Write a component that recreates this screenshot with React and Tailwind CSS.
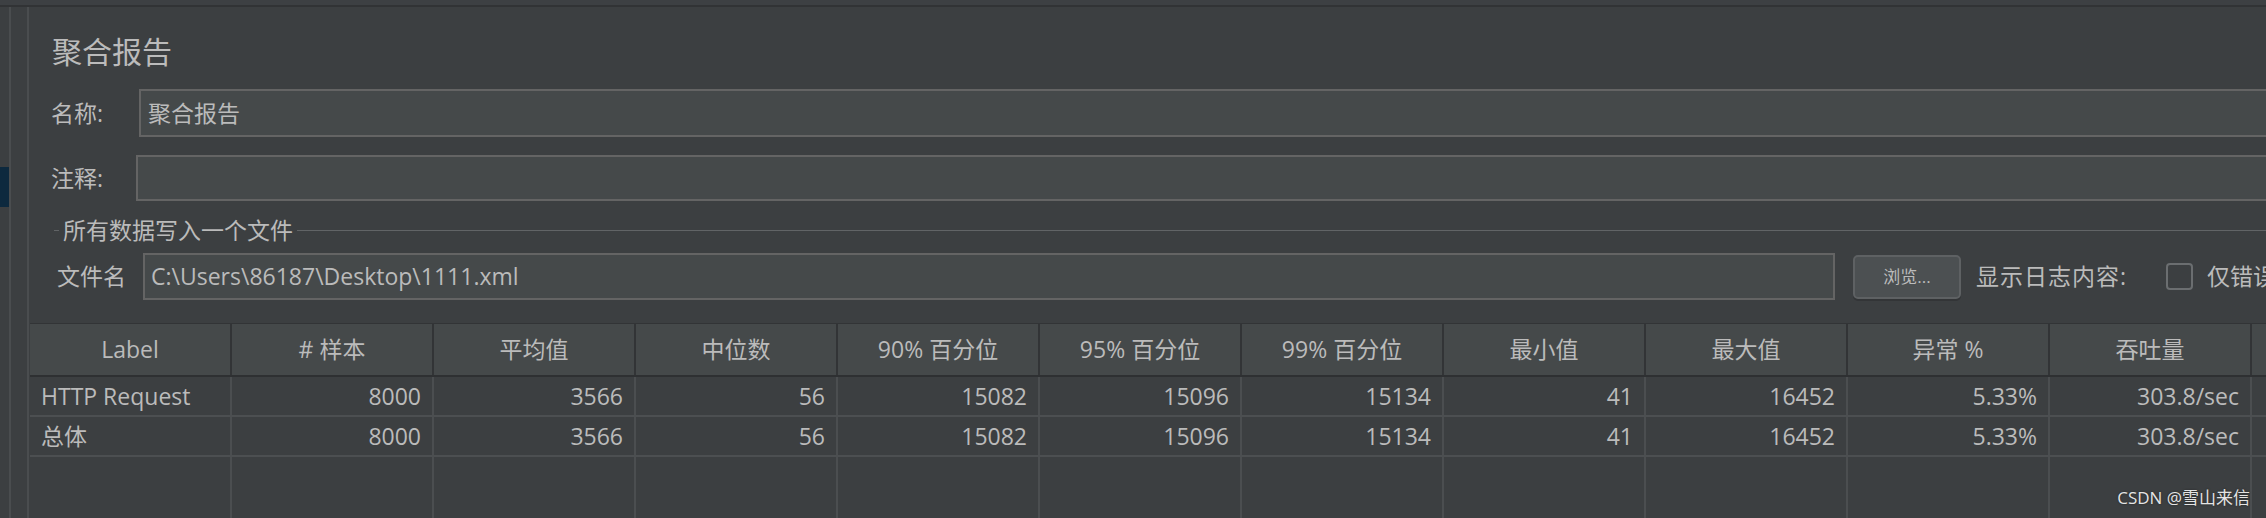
import React from "react";

const COLUMNS = ["Label", "# 样本", "平均值", "中位数", "90% 百分位", "95% 百分位", "99% 百分位", "最小值", "最大值", "异常 %", "吞吐量", ""];

const ROWS = [
  ["HTTP Request", "8000", "3566", "56", "15082", "15096", "15134", "41", "16452", "5.33%", "303.8/sec", ""],
  ["总体", "8000", "3566", "56", "15082", "15096", "15134", "41", "16452", "5.33%", "303.8/sec", ""],
];

function ResultTable() {
  return (
    <div className="ml-[1px] flex flex-1 flex-col">
      {/* 表头 */}
      <div className="flex h-[54px] border-t border-b-2 border-t-[#323436] border-b-[#2e3032] bg-[#45494a]">
        {COLUMNS.map((col, i) => (
          <div
            key={i}
            className="flex h-full w-[202px] shrink-0 items-center justify-center border-r-2 border-[#323436]"
          >
            {col}
          </div>
        ))}
        <div className="flex-1" />
      </div>

      {/* 数据行 */}
      {ROWS.map((row, r) => (
        <div key={r} className="flex h-[40px] border-b-2 border-[#4c4f51]">
          {row.map((cell, i) => (
            <div
              key={i}
              className={`flex h-full w-[202px] shrink-0 items-center border-r-2 border-[#4b4e50] ${
                i === 0 ? "justify-start pl-[11px]" : "justify-end pr-[11px]"
              }`}
            >
              {cell}
            </div>
          ))}
        </div>
      ))}

      {/* 空白区域 */}
      <div className="flex flex-1">
        {COLUMNS.map((_, i) => (
          <div key={i} className="h-full w-[202px] shrink-0 border-r-2 border-[#4b4e50]" />
        ))}
      </div>
    </div>
  );
}

export default function App() {
  return (
    <div className="relative flex h-[518px] w-[2266px] flex-col overflow-hidden bg-[#3c3f41] font-['Open_Sans','Noto_Sans_CJK_SC',sans-serif] text-[23px] text-[#bbbbbb]">
      {/* 顶部条 */}
      <div className="h-[7px] shrink-0 border-b-2 border-[#313335] bg-[#3d4043]" />

      <div className="flex min-h-0 flex-1">
        {/* 左侧树 */}
        <div className="flex w-[29px] shrink-0">
          <div className="flex w-[9px] flex-col">
            <div className="h-[160px]" />
            <div className="h-[40px] bg-[#0d293e]" />
          </div>
          <div className="w-[2px] bg-[#4a4d4f]" />
          <div className="w-[16px]" />
          <div className="w-[2px] bg-[#4a4d4f]" />
        </div>

        {/* 主面板 */}
        <div className="flex min-w-0 flex-1 flex-col">
          <div className="mt-[25px] h-[40px] pl-[23px] text-[30px] leading-[40px] whitespace-nowrap">聚合报告</div>

          <div className="mt-[17px] flex h-[48px] items-center pl-[22px]">
            <div className="w-[88px] shrink-0 whitespace-nowrap">名称:</div>
            <div className="-mr-[6px] flex h-full flex-1 items-center border-2 border-[#646464] bg-[#45494a] pl-[7px] whitespace-nowrap">
              聚合报告
            </div>
          </div>

          <div className="mt-[18px] flex h-[46px] items-center pl-[22px]">
            <div className="w-[85px] shrink-0 whitespace-nowrap">注释:</div>
            <div className="-mr-[6px] h-full flex-1 border-2 border-[#646464] bg-[#45494a]" />
          </div>

          <div className="mt-[17px] flex h-[24px] items-center pl-[25px]">
            <div className="h-px w-[5px] bg-[#616466]" />
            <div className="px-[4px] whitespace-nowrap">所有数据写入一个文件</div>
            <div className="h-px flex-1 bg-[#616466]" />
          </div>

          <div className="mt-[11px] flex h-[47px] items-center pl-[28px] whitespace-nowrap">
            <div className="w-[86px] shrink-0">文件名</div>
            <div className="flex h-full w-[1692px] shrink-0 items-center border-2 border-[#646464] bg-[#45494a] pl-[6px]">
              C:\Users\86187\Desktop\1111.xml
            </div>
            <button
              type="button"
              className="ml-[18px] flex h-[44px] w-[108px] shrink-0 items-center justify-center rounded-[5px] border-2 border-[#5e6163] bg-[#4c5052] text-[17px] text-[#bbbbbb] shadow-[0_2px_0_#333537]"
            >
              浏览...
            </button>
            <div className="ml-[15px] w-[190px] shrink-0 tracking-[1px]">显示日志内容:</div>
            <div className="h-[27px] w-[27px] shrink-0 rounded-[4px] border-2 border-[#6b6e70] bg-[#3c3f41]" />
            <div className="ml-[14px] shrink-0">仅错误日志</div>
          </div>

          <div className="mt-[23px] flex min-h-0 flex-1">
            <ResultTable />
          </div>
        </div>
      </div>

      {/* 水印 */}
      <div className="absolute right-[16px] bottom-[8px] text-[17px] text-[#e4e4e4] [text-shadow:0_0_2px_#222]">
        CSDN @雪山来信
      </div>
    </div>
  );
}
